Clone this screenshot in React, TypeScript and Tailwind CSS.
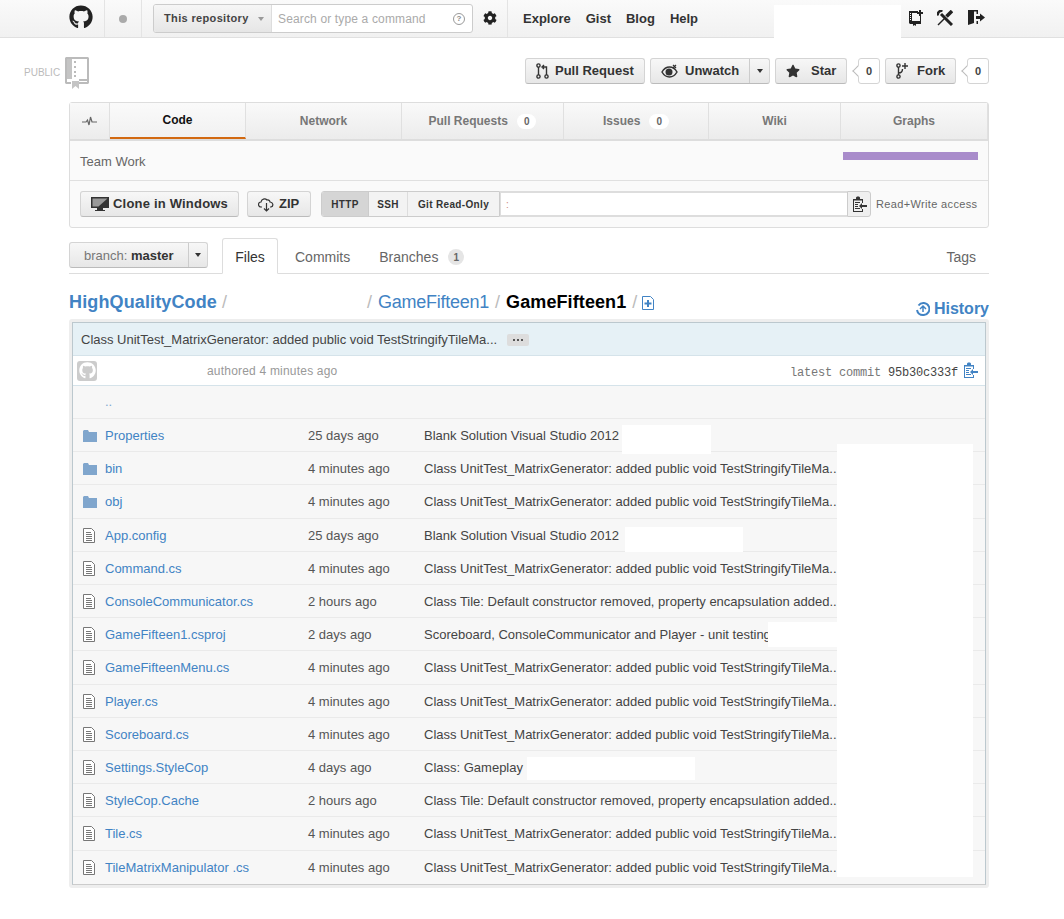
import type { ReactNode } from "react";
import { FaCog, FaGithub, FaStar } from "react-icons/fa";

const font = "font-['Liberation_Sans',Arial,sans-serif]";

const oldMsg = "Class UnitTest_MatrixGenerator: added public void TestStringifyTileMa...";
const tileMsg = "Class Tile: Default constructor removed, property encapsulation added...";
const blankMsg = "Blank Solution Visual Studio 2012";

const rows: { name: string; dir?: boolean; age: string; msg: string; h: string }[] = [
  { name: "Properties", dir: true, age: "25 days ago", msg: blankMsg, h: "h-[33px] pt-[1px]" },
  { name: "bin", dir: true, age: "4 minutes ago", msg: oldMsg, h: "h-[33px] pt-[1px]" },
  { name: "obj", dir: true, age: "4 minutes ago", msg: oldMsg, h: "h-[34px]" },
  { name: "App.config", age: "25 days ago", msg: blankMsg, h: "h-[33px] pt-[1px]" },
  { name: "Command.cs", age: "4 minutes ago", msg: oldMsg, h: "h-[33px] pt-[1px]" },
  { name: "ConsoleCommunicator.cs", age: "2 hours ago", msg: tileMsg, h: "h-[33px] pt-[1px]" },
  { name: "GameFifteen1.csproj", age: "2 days ago", msg: "Scoreboard, ConsoleCommunicator and Player - unit testing", h: "h-[33px] pt-[1px]" },
  { name: "GameFifteenMenu.cs", age: "4 minutes ago", msg: oldMsg, h: "h-[34px]" },
  { name: "Player.cs", age: "4 minutes ago", msg: oldMsg, h: "h-[33px] pt-[1px]" },
  { name: "Scoreboard.cs", age: "4 minutes ago", msg: oldMsg, h: "h-[33px] pt-[1px]" },
  { name: "Settings.StyleCop", age: "4 days ago", msg: "Class: Gameplay", h: "h-[33px] pt-[1px]" },
  { name: "StyleCop.Cache", age: "2 hours ago", msg: tileMsg, h: "h-[33px] pt-[1px]" },
  { name: "Tile.cs", age: "4 minutes ago", msg: oldMsg, h: "h-[34px]" },
  { name: "TileMatrixManipulator .cs", age: "4 minutes ago", msg: oldMsg, h: "h-[33px]" },
];

function FileIcon() {
  return (
    <svg width="12" height="15" viewBox="0 0 12 15" className="shrink-0">
      <path d="M.5.5h8l3 3v11H.5z" fill="#fff" stroke="#777" />
      <path d="M3 4.500h5M3 6.500h6M3 8.500h6M3 10.500h6M3 12.500h6" stroke="#777" />
    </svg>
  );
}

function FolderIcon() {
  return (
    <svg width="14" height="12" viewBox="0 0 14 12" className="shrink-0">
      <path d="M0 1l1-1h4l1 2h8v10H0z" fill="#80a6cd" />
    </svg>
  );
}

function ClipIcon({ color }: { color: string }) {
  return (
    <svg width="15" height="17" viewBox="0 0 15 17" className="shrink-0">
      <path d="M1 3h3V1.500L5 .5h2l1 1V3h3v4h-1V4.500H2V15h8v-2h1v3H1z" fill={color} />
      <path d="M3 6h5v1H3zM3 8h3v1H3zM3 10h3v1H3zM3 12h5v1H3z" fill={color} />
      <path d="M7 10l3-3v2h5v2h-5v2z" fill={color} />
    </svg>
  );
}

function Btn({ children, cls }: { children: ReactNode; cls: string }) {
  return (
    <div className={`flex h-[26px] items-center rounded-[3px] border border-[#d4d4d4] border-b-[#bbb] bg-gradient-to-b from-[#f7f7f7] to-[#e7e7e7] font-bold text-[#333] ${cls}`}>
      {children}
    </div>
  );
}

function Count({ n }: { n: string }) {
  return (
    <div className="relative ml-[11px] flex h-[26px] w-[22px] items-center justify-center rounded-[3px] border border-[#d4d4d4] bg-white text-[11px] font-bold text-[#444]">
      <span className="absolute left-[-5px] top-[8px] h-[8px] w-[8px] rotate-45 border-b border-l border-[#bbb] bg-white" />
      <span className="relative">{n}</span>
    </div>
  );
}

function Tab({ label, count, w, active }: { label: string; count?: string; w: string; active?: boolean }) {
  return (
    <div className={`flex items-center justify-center gap-[9px] border-r border-[#e0e0e0] text-[12px] font-bold ${w} ${active ? "border-b-2 border-b-[#d26911] bg-gradient-to-b from-[#fafafa] to-[#f1f1f1] text-[#111]" : "text-[#777]"}`}>
      {label}
      {count && <span className="rounded-[9px] bg-white px-[7px] py-[1px] text-[10px] leading-[13px] text-[#666]">{count}</span>}
    </div>
  );
}

export default function App() {
  return (
    <div className={`${font} relative h-[919px] w-[1064px] overflow-hidden bg-white text-[13px] text-[#333]`}>
      {/* top bar */}
      <header className="flex h-[38px] items-start border-b border-[#e0e0e0] bg-gradient-to-b from-[#fafafa] to-[#f1f1f1] pl-[69px]">
        <FaGithub className="mt-[5px] h-[24px] w-[24px] text-[#222]" />
        <div className="ml-[11px] flex h-[37px] w-[38px] items-center justify-center border-x border-[#e4e4e4]">
          <span className="h-[8px] w-[8px] rounded-full bg-[#aaa]" />
        </div>
        <div className="ml-[11px] mt-[4px] flex h-[29px] w-[320px] overflow-hidden rounded-[3px] border border-[#ccc] bg-white">
          <div className="flex w-[118px] items-center gap-[9px] border-r border-[#ddd] bg-gradient-to-b from-[#f6f6f6] to-[#e6e6e6] pl-[10px] text-[11px] font-bold tracking-[0.35px] text-[#444]">
            This repository
            <span className="border-x-[3px] border-t-[4px] border-x-transparent border-t-[#999]" />
          </div>
          <div className="flex flex-1 items-center pl-[6px] pr-[7px] text-[12px] tracking-[0.15px] text-[#aaa]">
            <span className="flex-1">Search or type a command</span>
            <span className="flex h-[12px] w-[12px] items-center justify-center rounded-full border border-[#999] text-[8px] font-bold text-[#888]">?</span>
          </div>
        </div>
        <FaCog className="ml-[10px] mt-[11px] h-[14px] w-[14px] text-[#222]" />
        <nav className="ml-[10px] flex h-[37px] items-center gap-[15px] border-l border-[#e4e4e4] pl-[15px] text-[13px] font-bold text-[#333]">
          <span>Explore</span>
          <span>Gist</span>
          <span>Blog</span>
          <span>Help</span>
        </nav>
        <div className="ml-[76px] mt-[5px] h-[33px] w-[127px] bg-white" />
        <svg width="14" height="16" viewBox="0 0 14 16" className="ml-[8px] mt-[10px]">
          <path d="M0 1h9v2H3v8h8V6h1v8H7v2l-1.500-1L4 16v-2H1l-1-1z" fill="#222" />
          <path d="M1 3h1v1H1zM1 5h1v1H1zM1 7h1v1H1zM1 9h1v1H1z" fill="#fff" />
          <path d="M10 0h2v2h2v2h-2v2h-2V4H8V2h2z" fill="#222" />
        </svg>
        <svg width="16" height="16" viewBox="0 0 16 16" fill="none" stroke="#222" className="ml-[14px] mt-[10px]">
          <path d="M4 4l11 11" strokeWidth="3" />
          <path d="M5.500.8A4 4 0 0 0 .8 5.500" strokeWidth="2.500" />
          <path d="M15 1L9.500 6.500" strokeWidth="3.500" />
          <path d="M8 8l-7 7" strokeWidth="1.500" />
        </svg>
        <svg width="17" height="15" viewBox="0 0 17 15" className="ml-[15px] mt-[10px]">
          <path d="M0 0h10v4H8.500V1.500H6V13l-6 2z" fill="#222" />
          <path d="M8.500 11H10v3H8.500z" fill="#222" />
          <path d="M8 6h4V3.500l5 4-5 4V9H8z" fill="#222" />
        </svg>
      </header>

      {/* repo title and actions */}
      <div className="flex h-[64px] items-start">
        <span className="ml-[24px] mt-[28px] w-[41px] text-[10px] leading-[13px] text-[#bbb]">PUBLIC</span>
        <svg width="24" height="32" viewBox="0 0 24 32" className="mt-[19px]">
          <path d="M1 0h22l1 1v25l-1 1H14v-2h8V2H7v20h15v2H14v-2H2v3h4v2H1l-1-1V1z" fill="#bbb" />
          <path d="M2 2h5v20H2z" fill="#c4c4c4" />
          <path d="M9 4h2v2H9zM9 9h2v2H9zM9 14h2v2H9zM9 18h2v2H9z" fill="#bbb" />
          <path d="M7 24h7v8l-3.500-3L7 32z" fill="#c4c4c4" />
        </svg>
        <div className="ml-[436px] mt-[20px] flex items-center text-[13px]">
          <Btn cls="w-[120px] pl-[10px] gap-[6px]">
            <svg width="13" height="16" viewBox="0 0 13 16" fill="none" stroke="#333" strokeWidth="1.400">
              <circle cx="2.500" cy="2.500" r="1.600" />
              <circle cx="2.500" cy="13.500" r="1.600" />
              <circle cx="10.500" cy="13.500" r="1.600" />
              <path d="M2.500 4v8M10.500 12V4H7M8 2L6 4l2 2" />
            </svg>
            Pull Request
          </Btn>
          <Btn cls="ml-[5px] w-[120px] pl-[10px] gap-[7px]">
            <svg width="17" height="14" viewBox="0 0 17 14">
              <path d="M1 8c2-3.500 4.500-5 7.500-5S14 4.500 16 8c-2 3.500-4.500 5-7.500 5S3 11.500 1 8z" fill="none" stroke="#333" strokeWidth="1.500" />
              <circle cx="8" cy="8" r="3.500" fill="#333" />
              <path d="M12 1l3 3M15 1l-3 3" stroke="#333" strokeWidth="1.200" />
            </svg>
            <span className="w-[57px]">Unwatch</span>
            <span className="flex h-full flex-1 items-center justify-center border-l border-[#ccc]">
              <span className="border-x-[3px] border-t-[4px] border-x-transparent border-t-[#333]" />
            </span>
          </Btn>
          <Btn cls="ml-[5px] w-[72px] pl-[10px] gap-[11px]">
            <FaStar className="h-[14px] w-[14px] text-[#333]" />
            Star
          </Btn>
          <Count n="0" />
          <Btn cls="ml-[5px] w-[71px] pl-[10px] gap-[8px]">
            <svg width="13" height="16" viewBox="0 0 13 16" fill="none" stroke="#333" strokeWidth="1.400">
              <circle cx="2.500" cy="2.500" r="1.600" />
              <circle cx="2.500" cy="13.500" r="1.600" />
              <path d="M2.500 4v8M2.500 10c3 0 4-2 4-4M9 0v6M6 3h6" />
            </svg>
            Fork
          </Btn>
          <Count n="0" />
        </div>
      </div>

      {/* repo nav */}
      <section className="ml-[69px] flex h-[126px] w-[920px] flex-col rounded-[3px] border border-[#ddd] bg-[#fafafa]">
        <div className="flex h-[38px] border-b-2 border-[#ddd] bg-gradient-to-b from-[#f9f9f9] to-[#ececec]">
          <div className="flex w-[40px] items-center justify-center border-r border-[#e0e0e0]">
            <svg width="15" height="10" viewBox="0 0 15 10" fill="none" stroke="#666" strokeWidth="1.200">
              <path d="M0 6h4l1.500-2L7 9l1.500-8L10 6h5" />
            </svg>
          </div>
          <Tab label="Code" w="w-[136px]" active />
          <Tab label="Network" w="w-[156px]" />
          <Tab label="Pull Requests" count="0" w="w-[162px]" />
          <Tab label="Issues" count="0" w="w-[145px]" />
          <Tab label="Wiki" w="w-[132px]" />
          <Tab label="Graphs" w="flex-1" />
        </div>
        <div className="flex h-[40px] items-start justify-between border-b border-[#e0e0e0] pl-[10px] pr-[10px]">
          <span className="mt-[13px] text-[13px] leading-[16px] text-[#666]">Team Work</span>
          <span className="mt-[11px] h-[8px] w-[135px] bg-[#a98ccb]" />
        </div>
        <div className="flex flex-1 items-center pl-[10px]">
          <Btn cls="w-[159px] pl-[10px] gap-[4px] text-[13px] tracking-[0.2px]">
            <svg width="18" height="15" viewBox="0 0 18 15">
              <path d="M0 0h18v11H0z" fill="#333" />
              <path d="M1.500 1.500h15l-9 8h-6z" fill="#999" />
              <path d="M6 11h6v2h2v1H4v-1h2z" fill="#333" />
            </svg>
            Clone in Windows
          </Btn>
          <Btn cls="ml-[8px] w-[64px] pl-[10px] gap-[4px] text-[13px]">
            <svg width="17" height="15" viewBox="0 0 17 15" fill="none" stroke="#333" strokeWidth="1.200">
              <path d="M4 10H3a2.500 2.500 0 010-5c.5-3 4-4 6-2 2-.5 3 1 3 2 3 0 4 4 1 5h-1" />
              <path d="M8.500 6v8M6 11.500l2.500 2.500 2.500-2.500" />
            </svg>
            ZIP
          </Btn>
          <div className="ml-[10px] flex h-[26px] overflow-hidden rounded-l-[3px] border border-[#ccc] text-[10px] font-bold tracking-[0.35px] text-[#333]">
            <span className="flex w-[47px] items-center justify-center border-r border-[#ccc] bg-[#d5d5d5]">HTTP</span>
            <span className="flex w-[39px] items-center justify-center border-r border-[#ddd] bg-[#f3f3f3]">SSH</span>
            <span className="flex w-[91px] items-center justify-center bg-[#f3f3f3]">Git Read-Only</span>
          </div>
          <div className="flex h-[26px] w-[347px] items-center border-y-2 border-l border-[#ddd] bg-white pl-[5px] text-[10px] text-[#c87]">:</div>
          <div className="flex h-[26px] w-[24px] items-center justify-center rounded-r-[3px] border border-[#ccc] bg-[#efefef]">
            <ClipIcon color="#333" />
          </div>
          <span className="ml-[5px] text-[11px] tracking-[0.35px] text-[#666]">Read+Write access</span>
        </div>
      </section>

      {/* sub tabs */}
      <div className="ml-[69px] mt-[10px] flex h-[36px] w-[920px] items-start border-b border-[#ddd] text-[14px] text-[#666]">
        <Btn cls="mt-[4px] w-[139px] pl-[14px] text-[13px] font-normal">
          <span className="w-[104px] pt-[1px] font-normal text-[#777]">branch: <b className="text-[#333]">master</b></span>
          <span className="flex h-full flex-1 items-center justify-center border-l border-[#ccc]">
            <span className="border-x-[3px] border-t-[4px] border-x-transparent border-t-[#333]" />
          </span>
        </Btn>
        <div className="ml-[14px] flex h-[36px] w-[56px] items-center justify-center rounded-t-[3px] border border-[#ddd] border-b-white bg-white pt-[2px] text-[#333]">Files</div>
        <span className="ml-[17px] mt-[9px]">Commits</span>
        <span className="ml-[29px] mt-[9px]">Branches</span>
        <span className="ml-[10px] mt-[11px] flex h-[16px] w-[16px] items-center justify-center rounded-full bg-[#e5e5e5] text-[10px] font-bold text-[#666]">1</span>
        <span className="ml-auto mr-[13px] mt-[9px]">Tags</span>
      </div>

      {/* breadcrumb */}
      <div className="ml-[69px] mt-[15px] flex h-[30px] w-[920px] items-start text-[18px] text-[#bbb]">
        <b className="tracking-[0.13px] text-[#4183c4]">HighQualityCode</b>
        <span className="ml-[5px]">/</span>
        <span className="ml-[140px]">/</span>
        <span className="ml-[6px] tracking-[-0.25px] text-[#4183c4]">GameFifteen1</span>
        <span className="ml-[6px]">/</span>
        <b className="ml-[6px] tracking-[0.1px] text-black">GameFifteen1</b>
        <span className="ml-[6px]">/</span>
        <svg width="12" height="14" viewBox="0 0 12 14" className="ml-[5px] mt-[7px]">
          <path d="M.5.5h8l3 3v10H.5z" fill="#fff" stroke="#4183c4" />
          <path d="M5 4h2v2.500h2.500v2H7V11H5V8.500H2.500v-2H5z" fill="#4183c4" />
        </svg>
        <div className="ml-auto mt-[8px] flex items-center gap-[4px] text-[16px] font-bold text-[#4183c4]">
          <svg width="14" height="14" viewBox="0 0 14 14" fill="none" stroke="#4183c4" strokeWidth="2">
            <path d="M2.500 3.500A6 6 0 117 13a6 6 0 01-6-5" />
            <path d="M4 7l3-3 3 3M7 4v6" strokeWidth="1.500" />
          </svg>
          History
        </div>
      </div>

      {/* file table */}
      <div className="relative ml-[69px] w-[920px] rounded-[3px] bg-[#eee] p-[3px]">
        <div className="border border-[#bcc8ce] border-b-[#ccc] bg-[#f7f7f7]">
          <div className="flex h-[33px] items-center gap-[10px] border-b border-[#d5e3ea] bg-[#e6f1f6] pl-[8px] pt-[1px] text-[13px] text-[#444]">
            Class UnitTest_MatrixGenerator: added public void TestStringifyTileMa...
            <span className="flex h-[12px] w-[22px] items-center justify-center gap-[2px] rounded-[2px] bg-[#ddd]">
              <span className="h-[2px] w-[2px] bg-[#555]" />
              <span className="h-[2px] w-[2px] bg-[#555]" />
              <span className="h-[2px] w-[2px] bg-[#555]" />
            </span>
          </div>
          <div className="flex h-[30px] items-center border-b border-[#d5e3ea] bg-white pl-[4px] pr-[7px]">
            <span className="flex h-[20px] w-[20px] items-center justify-center rounded-[3px] bg-[#ccc]">
              <FaGithub className="h-[17px] w-[17px] text-white" />
            </span>
            <span className="ml-[110px] text-[12px] tracking-[0.2px] text-[#999]">authored 4 minutes ago</span>
            <span className="ml-auto mt-[5px] font-['Liberation_Mono',monospace] text-[12px] tracking-[-0.2px] text-[#777]">latest commit <span className="text-[#444]">95b30c333f</span></span>
            <span className="ml-[5px] -mt-[1px]"><ClipIcon color="#4183c4" /></span>
          </div>
          <div className="flex h-[33px] items-center border-b border-[#eaeaea] pl-[32px] text-[#7fa8d0]">..</div>
          {rows.map((r) => (
            <div key={r.name} className={`flex items-center border-b border-[#eaeaea] last:border-b-0 ${r.h}`}>
              <span className="flex w-[32px] justify-start pl-[10px]">
                {r.dir ? <FolderIcon /> : <FileIcon />}
              </span>
              <span className="w-[203px] text-[#4183c4]">{r.name}</span>
              <span className="w-[116px] text-[#555]">{r.age}</span>
              <span className="whitespace-nowrap text-[#444]">{r.msg}</span>
            </div>
          ))}
        </div>
        {/* blanked-out regions in the picture */}
        <div className="absolute left-[553px] top-[106px] h-[29px] w-[89px] bg-white" />
        <div className="absolute left-[768px] top-[125px] h-[433px] w-[136px] bg-white" />
        <div className="absolute left-[556px] top-[208px] h-[25px] w-[118px] bg-white" />
        <div className="absolute left-[699px] top-[303px] h-[25px] w-[69px] bg-white" />
        <div className="absolute left-[458px] top-[438px] h-[23px] w-[168px] bg-white" />
      </div>
    </div>
  );
}
